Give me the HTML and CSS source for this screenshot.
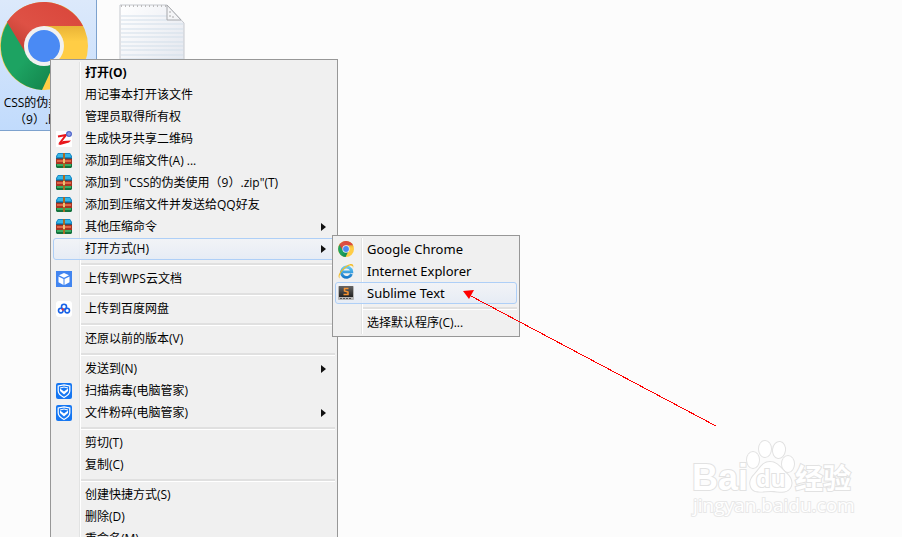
FILE: index.html
```html
<!DOCTYPE html>
<html lang="zh-CN">
<head>
    <meta charset="UTF-8">
    <meta name="viewport" content="width=device-width, initial-scale=1.0">
    <title>打开方式</title>
    <link rel="stylesheet" href="styles.css">
</head>
<body>
    <svg class="defs" aria-hidden="true">
        <defs>
            <linearGradient id="red" x1="0" y1="1" x2="1" y2="0"><stop offset="0" stop-color="#b83a2d"/><stop offset=".4" stop-color="#de5145"/><stop offset="1" stop-color="#d9453a"/></linearGradient>
            <linearGradient id="green" x1="0" y1="0" x2="1" y2="1"><stop offset=".5" stop-color="#1da362"/><stop offset="1" stop-color="#128049"/></linearGradient>
            <linearGradient id="yellow" x1="0" y1="0" x2="0" y2="1"><stop offset=".25" stop-color="#e6b035"/><stop offset=".45" stop-color="#ffcd45"/></linearGradient>
            <linearGradient id="paper" x1="0" y1="0" x2="1" y2="1"><stop offset="0" stop-color="#fff"/><stop offset="1" stop-color="#dfe3ec"/></linearGradient>
            <linearGradient id="dark" x1="0" y1="0" x2="0" y2="1"><stop offset="0" stop-color="#666"/><stop offset="1" stop-color="#222"/></linearGradient>
            <linearGradient id="ie-blue" x1="0" y1="0" x2="0" y2="1"><stop offset="0" stop-color="#62c8f5"/><stop offset="1" stop-color="#1879c9"/></linearGradient>
        </defs>
        <symbol id="chrome" viewBox="0 0 88 88">
            <circle cx="44" cy="44" r="44" fill="url(#yellow)"/>
            <path d="M8 20A44 44 0 0 0 42 88L54 62L44 44Z" fill="url(#green)"/>
            <path d="M7 20A44 44 0 0 1 83 24H44L25 50Z" fill="url(#red)"/>
            <circle cx="44" cy="44" r="20" fill="#f1f1f1"/>
            <circle cx="44" cy="44" r="16" fill="#4a8af4"/>
        </symbol>
        <symbol id="kuaiya" viewBox="0 0 16 16">
            <path fill="#fff" d="M0 0h16v16H0z"/>
            <path d="M2 5.500L10 4L3.500 12.500" fill="none" stroke="#e8161b" stroke-width="2"/>
            <path d="M2 13L7 10L15 9.500L13 11.500L4 14z" fill="#e8161b"/>
            <circle cx="13" cy="3" r="3" fill="#5369cc"/>
            <path d="M12 2h2v2h-2z" fill="none" stroke="#9cabe8"/>
        </symbol>
        <symbol id="zip" viewBox="0 0 16 16">
            <path d="M2 0h12l2 3v3H0V3z" fill="#1787c5"/>
            <path d="M2 1h12l1 3H1z" fill="#36b7e4"/>
            <path d="M0 6h16v5H0z" fill="#a93422"/>
            <path d="M1 7h14v2H1z" fill="#df6748"/>
            <path d="M0 11h16v3l-1 1H1l-1-1z" fill="#14723d"/>
            <path d="M1 11h14v2H1z" fill="#3cad63"/>
            <path d="M0 5.500h16" stroke="#31566b"/>
            <path d="M7 0h2v15H7z" fill="#a66a25"/>
            <path d="M7 6h2v4H7z" fill="#ebc573"/>
        </symbol>
        <symbol id="wps" viewBox="0 0 16 16">
            <path fill="#4285f0" d="M0 0h16v16H0z"/>
            <path fill="#fff" d="M8 2l5 2.200-5 2.500-5-2.500zM2.500 5.500l5 2.400v6l-5-2.600zM13.500 5.500l-5 2.400v6l5-2.600z"/>
        </symbol>
        <symbol id="netdisk" viewBox="0 0 16 16">
            <rect width="16" height="16" rx="3" fill="#fff"/>
            <g fill="none" stroke-width="1.600">
                <circle cx="8" cy="5.800" r="2.500" stroke="#1762e8"/>
                <circle cx="4.800" cy="9.600" r="2.300" stroke="#1762e8"/>
                <circle cx="11.200" cy="9.600" r="2.300" stroke="#1762e8"/>
                <path d="M6 7.500l1.500 2" stroke="#ed2b38"/>
            </g>
        </symbol>
        <symbol id="shield" viewBox="0 0 16 16">
            <rect width="16" height="16" rx="2" fill="#1677f2"/>
            <path d="M8 1.800L13.800 3V8c0 3-3 5-5.800 6.500C5.200 13 2.200 11 2.200 8V3z" fill="none" stroke="#fff" stroke-width="1.200"/>
            <path d="M4 5.500L8 8.500L12 5.500V8L8 11.500L4 8z" fill="#fff"/>
            <path d="M4 5l4-1 4 1" fill="none" stroke="#fff"/>
        </symbol>
        <symbol id="ie" viewBox="0 0 16 16">
            <path d="M13.500 11A5.200 5.200 0 1 1 13.800 8.800H5" fill="none" stroke="url(#ie-blue)" stroke-width="2.800"/>
            <path d="M2 15.500C-2 14 3 6 9 2.500C13 0 16.500 .5 15 5C15 2 12 2 9 4C4 7 0 13 2 15.500z" fill="#f4bd25"/>
        </symbol>
        <symbol id="sublime" viewBox="0 0 16 16">
            <rect x="0" y="1" width="16" height="14" rx="1" fill="#b5b5b5"/>
            <path d="M1 1h14v11H1z" fill="url(#dark)"/>
            <path d="M2 13.500h12" stroke="#555" stroke-dasharray="2 1"/>
            <path d="M10.500 3.500H6.500v2.500l3.500 1V9.500H5.500" fill="none" stroke="#f79432" stroke-width="1.500"/>
        </symbol>
    </svg>

    <main class="desktop">
        <a href="#" class="file selected">
            <svg class="file-icon"><use href="#chrome"/></svg>
            <span>CSS的伪类使用<br>（9）.html</span>
        </a>
        <a href="#" class="file" aria-label="文本文档">
            <svg class="paper" viewBox="0 0 67 88">
                <path d="M1 1h47l17 18v68H1z" fill="url(#paper)" stroke="#c5c8ce"/>
                <path d="M2 12h46M2 16h46M2 20h62M2 25h62M2 29h62M2 33h62M2 38h62M2 42h62M2 46h62M2 51h62M2 55h62" stroke="#d3dfea"/>
                <path d="M48 1v15h14z" fill="#f4f5f7" stroke="#a6a8ac"/>
                <path d="M51 7v6h6" fill="none" stroke="#aaa" stroke-dasharray="2 2"/>
                <path d="M2 2h46" stroke="#bbb" stroke-width="2" stroke-dasharray="1 3"/>
            </svg>
        </a>
    </main>

    <ul class="menu main-menu">
        <li><button><span class="icon"></span><b>打开(O)</b></button></li>
        <li><button><span class="icon"></span>用记事本打开该文件</button></li>
        <li><button><span class="icon"></span>管理员取得所有权</button></li>
        <li><button><svg class="icon"><use href="#kuaiya"/></svg>生成快牙共享二维码</button></li>
        <li><button><svg class="icon"><use href="#zip"/></svg>添加到压缩文件(A) ...</button></li>
        <li><button><svg class="icon"><use href="#zip"/></svg>添加到 "CSS的伪类使用（9）.zip"(T)</button></li>
        <li><button><svg class="icon"><use href="#zip"/></svg>添加到压缩文件并发送给QQ好友</button></li>
        <li><button class="more"><svg class="icon"><use href="#zip"/></svg>其他压缩命令</button></li>
        <li class="has-submenu">
            <button class="more active"><span class="icon"></span>打开方式(H)</button>
            <ul class="menu submenu">
                <li><button class="app"><svg class="icon"><use href="#chrome"/></svg>Google Chrome</button></li>
                <li><button class="app"><svg class="icon"><use href="#ie"/></svg>Internet Explorer</button></li>
                <li><button class="app active"><svg class="icon"><use href="#sublime"/></svg>Sublime Text</button></li>
                <li class="separator"></li>
                <li><button><span class="icon"></span>选择默认程序(C)...</button></li>
            </ul>
        </li>
        <li class="separator"></li>
        <li><button><svg class="icon"><use href="#wps"/></svg>上传到WPS云文档</button></li>
        <li class="separator"></li>
        <li><button><svg class="icon"><use href="#netdisk"/></svg>上传到百度网盘</button></li>
        <li class="separator"></li>
        <li><button><span class="icon"></span>还原以前的版本(V)</button></li>
        <li class="separator"></li>
        <li><button class="more"><span class="icon"></span>发送到(N)</button></li>
        <li><button><svg class="icon"><use href="#shield"/></svg>扫描病毒(电脑管家)</button></li>
        <li><button class="more"><svg class="icon"><use href="#shield"/></svg>文件粉碎(电脑管家)</button></li>
        <li class="separator"></li>
        <li><button><span class="icon"></span>剪切(T)</button></li>
        <li><button><span class="icon"></span>复制(C)</button></li>
        <li class="separator"></li>
        <li><button><span class="icon"></span>创建快捷方式(S)</button></li>
        <li><button><span class="icon"></span>删除(D)</button></li>
        <li><button><span class="icon"></span>重命名(M)</button></li>
    </ul>

    <svg class="pointer" viewBox="0 0 254 137" aria-hidden="true">
        <path d="M6 5L253 136" stroke="#f00" shape-rendering="crispEdges"/>
        <path d="M0 1L11 0L6 9z" fill="#f00"/>
    </svg>

    <svg class="watermark" viewBox="0 0 170 84">
        <g class="outline">
            <ellipse cx="63" cy="25" rx="6" ry="8"/>
            <ellipse cx="75" cy="14" rx="6" ry="8"/>
            <ellipse cx="89" cy="15" rx="6" ry="8" transform="rotate(8 89 15)"/>
            <ellipse cx="98" cy="29" rx="6" ry="8"/>
            <path d="M80 27c-8 0-10 7-15 12-4 4-6 8-4 13 3 7 12 4 20 4s15 3 19-3c3-5 1-10-3-14-6-5-9-12-17-12z"/>
        </g>
        <text class="outline logo" x="2" y="55">Bai</text>
        <text class="outline du" x="66" y="52">du</text>
        <text class="outline cjk" x="105" y="54">经验</text>
        <text class="outline site" x="3" y="77">jingyan.baidu.com</text>
    </svg>
</body>
</html>
```

FILE: styles.css
```css
* { box-sizing: border-box; }
body { margin: 0; height: 100vh; overflow: hidden; position: relative; background: #fcfcfc; color: #000; font: 12px/16px "Open Sans", "Noto Sans CJK SC", sans-serif; }
ul { list-style: none; margin: 0; padding: 0; }
.defs { position: absolute; width: 0; height: 0; }

/* desktop */
.desktop { display: flex; align-items: flex-start; gap: 22px; }
.file { color: #000; text-decoration: none; text-align: center; }
.file span { display: block; margin-top: 4px; line-height: 17px; }
.selected { padding: 2px 8px 2px 0; background: linear-gradient(#dce9fb, #c1dbfc); border: 1px solid #7da2ce; border-width: 0 1px 1px 0; }
.file-icon { display: block; width: 88px; height: 88px; }
.paper { display: block; width: 67px; height: 88px; margin-top: 4px; }

/* context menus */
.menu { position: absolute; padding: 2px; border: 1px solid #979797; background: linear-gradient(90deg, transparent 26px, #e2e3e3 26px, #e2e3e3 27px, #fff 27px, #fff 28px, transparent 28px) content-box, #f0f0f0; }
.main-menu { left: 50px; top: 59px; width: 288px; }
.submenu { left: 279px; top: -3px; width: 188px; }
.has-submenu { position: relative; }
.menu button { display: flex; align-items: center; width: 100%; height: 22px; padding: 0 8px 0 2px; border: 1px solid transparent; border-radius: 3px; background: none; font: inherit; color: #000; text-align: left; white-space: nowrap; }
.menu .active { border-color: #aecff7; background: linear-gradient(rgba(242, 244, 248, .8), rgba(228, 235, 246, .8)); }
.menu .app { font: 13px "Noto Sans", sans-serif; padding-bottom: 1px; }
.icon { flex: none; width: 16px; height: 16px; margin-right: 13px; }
.more::after { content: ""; margin-left: auto; border: 4px solid transparent; border-left: 5px solid #111; border-right: 0; }
.separator { height: 8px; padding: 3px 0 3px 28px; }
.separator::before { content: ""; display: block; height: 2px; background: #e0e0e0; border-bottom: 1px solid #fff; }

/* overlays */
.pointer { position: absolute; left: 463px; top: 290px; width: 254px; height: 137px; }
.watermark { position: absolute; left: 690px; top: 435px; width: 170px; height: 84px; }
.outline { fill: #fff; stroke: #e2e2e2; stroke-width: 2px; paint-order: stroke; }
.logo { font: bold 36px "Liberation Sans", sans-serif; }
.du { font: bold 23px "Open Sans", sans-serif; }
.cjk { font: bold 28px "Noto Sans CJK SC", sans-serif; }
.site { font: 19px "Open Sans", sans-serif; stroke: #e8e8e8; }
```
